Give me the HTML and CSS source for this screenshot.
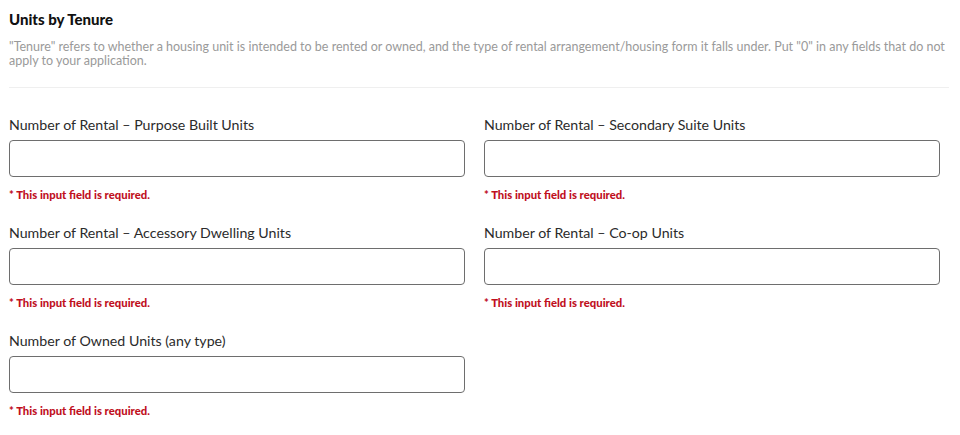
FILE: index.html
```html
<!DOCTYPE html>
<html lang="en">
<head>
<meta charset="utf-8">
<title>Units by Tenure</title>
<link rel="stylesheet" href="styles.css">
</head>
<body>
<section class="section">
  <h2 class="section-title">Units by Tenure</h2>
  <p class="section-desc">"Tenure" refers to whether a housing unit is intended to be rented or owned, and the type of rental arrangement/housing form it falls under. Put "0" in any fields that do not apply to your application.</p>
  <hr class="divider">
  <div class="fields">
    <div class="field">
      <label class="field-label" for="f1">Number of Rental – Purpose Built Units</label>
      <input class="field-input" id="f1" type="text">
      <div class="field-error">* This input field is required.</div>
    </div>
    <div class="field">
      <label class="field-label" for="f2">Number of Rental – Secondary Suite Units</label>
      <input class="field-input" id="f2" type="text">
      <div class="field-error">* This input field is required.</div>
    </div>
    <div class="field">
      <label class="field-label" for="f3">Number of Rental – Accessory Dwelling Units</label>
      <input class="field-input" id="f3" type="text">
      <div class="field-error">* This input field is required.</div>
    </div>
    <div class="field">
      <label class="field-label" for="f4">Number of Rental – Co-op Units</label>
      <input class="field-input" id="f4" type="text">
      <div class="field-error">* This input field is required.</div>
    </div>
    <div class="field">
      <label class="field-label" for="f5">Number of Owned Units (any type)</label>
      <input class="field-input" id="f5" type="text">
      <div class="field-error">* This input field is required.</div>
    </div>
  </div>
</section>
</body>
</html>
```
FILE: styles.css
```css
html, body {
  margin: 0;
  padding: 0;
  background: #fff;
}
body {
  font-family: Lato, "Liberation Sans", sans-serif;
  color: #333;
}
.section {
  padding: 9px 11px 0 9px;
}
.section-title {
  margin: 0;
  font-size: 15px;
  line-height: 20px;
  font-weight: 900;
  color: #111;
}
.section-desc {
  margin: 11px 0 0;
  font-size: 12.5px;
  line-height: 14px;
  color: #9a9a9a;
}
.divider {
  margin: 19px 0 0;
  border: 0;
  border-top: 1px solid #efefef;
  height: 0;
}
.fields {
  margin-top: 27px;
  padding-right: 9px;
  display: grid;
  grid-template-columns: 1fr 1fr;
  column-gap: 19px;
}
.field {
  display: flex;
  flex-direction: column;
  margin-bottom: 20px;
}
.field-label {
  font-size: 14.2px;
  line-height: 20px;
  color: #2b2b2b;
  margin-bottom: 5px;
}
.field-input {
  box-sizing: border-box;
  height: 37px;
  width: 100%;
  margin: 0;
  border: 1px solid #6e6e6e;
  border-radius: 4px;
  background: #fff;
  font: inherit;
  padding: 0 10px;
}
.field-error {
  margin-top: 10px;
  font-size: 11.3px;
  line-height: 16px;
  font-weight: 900;
  color: #c0101e;
}
```
